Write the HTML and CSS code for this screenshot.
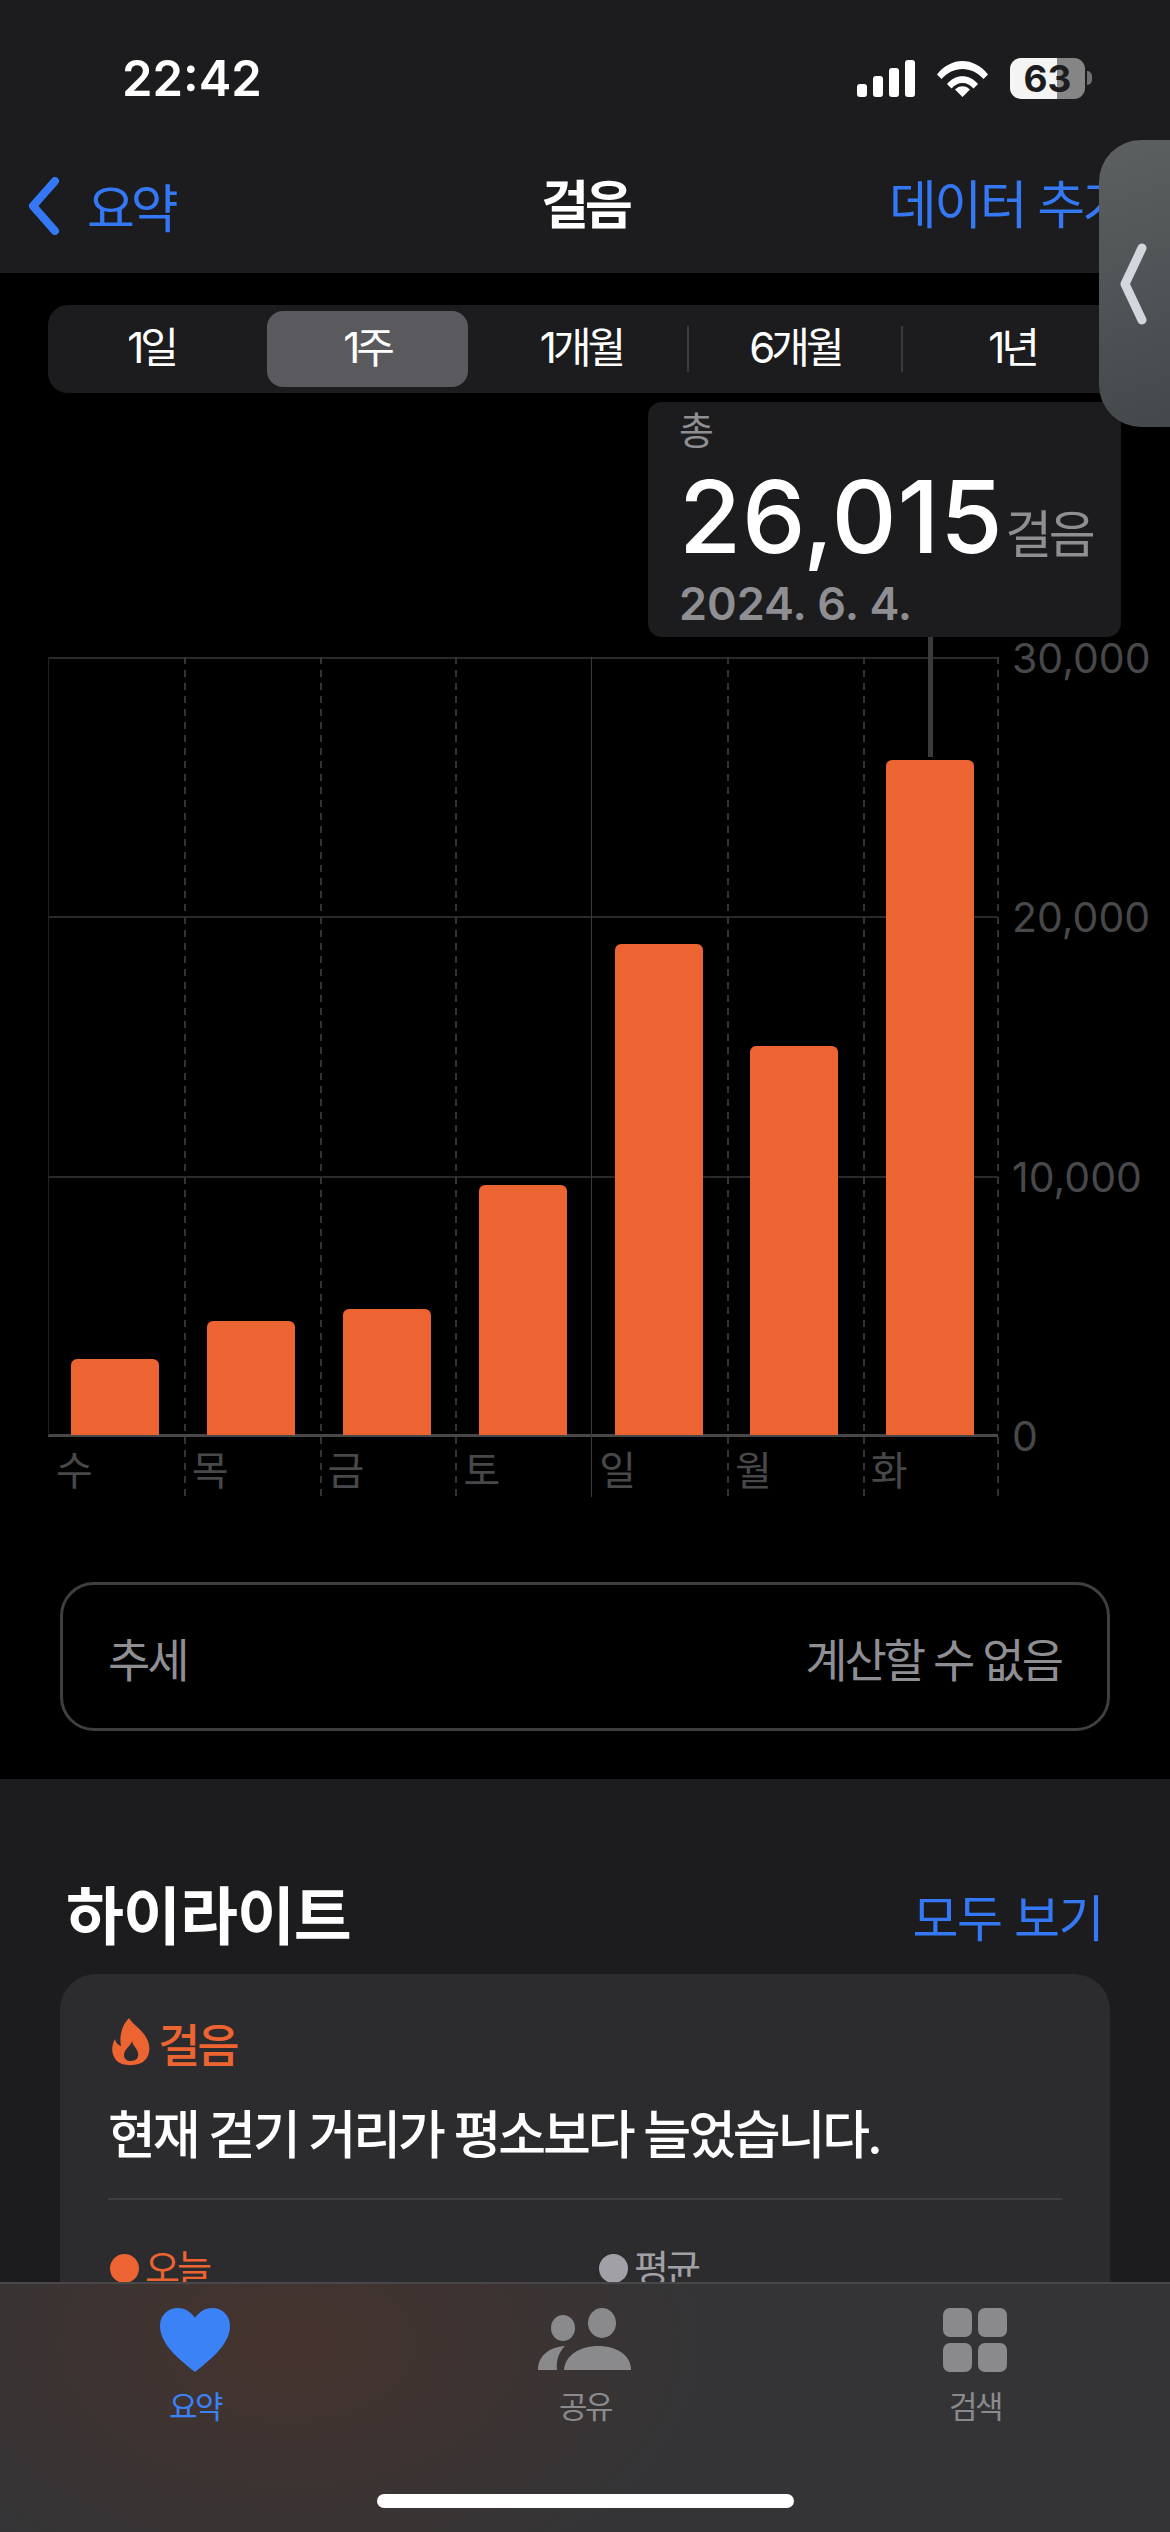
FILE: index.html
```html
<!DOCTYPE html>
<html lang="ko">
<head>
    <meta charset="UTF-8">
    <meta name="viewport" content="width=device-width, initial-scale=1.0">
    <title>걸음</title>
    <link rel="stylesheet" href="styles.css">
</head>
<body>
<div class="screen">

    <header class="top">
        <div class="status">
            <span class="time">22:42</span>
            <div class="status-icons">
                <svg class="signal" width="58" height="37" viewBox="0 0 58 37" fill="#fff">
                    <rect x="0" y="24" width="10" height="13" rx="3"/>
                    <rect x="16" y="16" width="10" height="21" rx="3"/>
                    <rect x="32" y="8" width="10" height="29" rx="3"/>
                    <rect x="48" y="0" width="10" height="37" rx="3"/>
                </svg>
                <svg class="wifi" width="51" height="37" viewBox="0 0 51 37" fill="#fff">
                    <path d="M0 14.500C14-3.500 37-3.500 51 14.500L46.500 19C35 5.500 16 5.500 4.500 19Z"/>
                    <path d="M10 24C18.500 13.500 32.500 13.500 41 24L36.500 28.500C30.500 21 20.500 21 14.500 28.500Z"/>
                    <path d="M18 29.500C22 25 29 25 33 29.500L25.500 37Z"/>
                </svg>
                <div class="battery">
                    <div class="battery-body"><span class="battery-fill"></span><span class="battery-num">63</span></div>
                    <span class="battery-nub"></span>
                </div>
            </div>
        </div>
        <nav class="navbar">
            <a class="back">
                <svg width="32" height="58" viewBox="0 0 32 58" fill="none" stroke="#3478f6" stroke-width="8" stroke-linecap="round" stroke-linejoin="round"><path d="M27 4L5 29L27 54"/></svg>
                <span>요약</span>
            </a>
            <span class="nav-title">걸음</span>
            <a class="nav-action">데이터 추가</a>
        </nav>
    </header>

    <main class="detail">
        <div class="range">
            <span class="range-item first">1일</span>
            <span class="range-item active">1주</span>
            <span class="range-item sep">1개월</span>
            <span class="range-item sep">6개월</span>
            <span class="range-item last">1년</span>
        </div>

        <div class="chart">
            <div class="grid-rows">
                <div class="grid-row"><i class="grid-line"></i><span class="grid-label">30,000</span></div>
                <div class="grid-row"><i class="grid-line"></i><span class="grid-label">20,000</span></div>
                <div class="grid-row"><i class="grid-line"></i><span class="grid-label">10,000</span></div>
                <div class="grid-row base"><i class="grid-line"></i><span class="grid-label">0</span></div>
            </div>
            <div class="days">
                <div class="day first"><div class="plot"><div class="bar" style="height: 76px"></div></div><span class="day-name">수</span></div>
                <div class="day"><div class="plot"><div class="bar" style="height: 114px"></div></div><span class="day-name">목</span></div>
                <div class="day"><div class="plot"><div class="bar" style="height: 126px"></div></div><span class="day-name">금</span></div>
                <div class="day"><div class="plot"><div class="bar" style="height: 250px"></div></div><span class="day-name">토</span></div>
                <div class="day sunday"><div class="plot"><div class="bar" style="height: 491px"></div></div><span class="day-name">일</span></div>
                <div class="day"><div class="plot"><div class="bar" style="height: 389px"></div></div><span class="day-name">월</span></div>
                <div class="day last"><div class="plot"><div class="bar" style="height: 675px"></div></div><span class="day-name">화</span></div>
            </div>
        </div>

        <div class="trend">
            <span>추세</span>
            <span>계산할 수 없음</span>
        </div>
    </main>

    <section class="highlights">
        <div class="section-head">
            <h2>하이라이트</h2>
            <a>모두 보기</a>
        </div>
        <article class="card">
            <div class="card-title">
                <svg width="38" height="48" viewBox="0 0 38 48"><path fill="#ec6431" fill-rule="evenodd" d="M17 0C20 6 30 11 35 21C39 29 38 38 32 43C27 48 11 49 5 43C-1 37-1 28 3 21C4 25 6 27 9 28C7 18 10 7 17 0ZM20 23C19 28 12 31 12 37C12 41 15 43 19 43C24 43 27 40 26 35C25 30 21 28 20 23Z"/></svg>
                <span>걸음</span>
            </div>
            <p class="card-text">현재 걷기 거리가 평소보다 늘었습니다.</p>
            <hr class="card-rule">
            <div class="legend">
                <div class="legend-item today"><i></i><span>오늘</span></div>
                <div class="legend-item avg"><i></i><span>평균</span></div>
            </div>
        </article>
    </section>

    <!-- floats over the content -->
    <div class="tooltip">
        <span class="tip-label">총</span>
        <div class="tip-value"><strong>26,015</strong><span>걸음</span></div>
        <span class="tip-date">2024. 6. 4.</span>
    </div>
    <i class="tip-stem"></i>

    <div class="side-handle">
        <svg width="30" height="84" viewBox="0 0 30 84" fill="none" stroke="#d3d6dc" stroke-width="9" stroke-linecap="round" stroke-linejoin="round"><path d="M24 6L7 42L24 78"/></svg>
    </div>

    <footer class="tabbar">
        <div class="tabs">
            <a class="tab current">
                <svg width="70" height="64" viewBox="0 0 70 64" fill="#3b82f6"><path d="M35 64C24 55 0 38 0 18C0 7 8 0 18 0C25 0 31 4 35 10C39 4 45 0 52 0C62 0 70 7 70 18C70 38 46 55 35 64Z"/></svg>
                <span>요약</span>
            </a>
            <a class="tab">
                <svg width="94" height="64" viewBox="0 0 94 64" fill="#8a8a8d">
                    <ellipse cx="25" cy="20" rx="12" ry="13"/>
                    <path d="M0 62C0 48 11 39 27 38C21 44 18 52 19 62Z"/>
                    <ellipse cx="64" cy="15" rx="14" ry="15"/>
                    <path d="M26 62C27 46 44 38 60 38C77 38 93 46 93 62Z"/>
                </svg>
                <span>공유</span>
            </a>
            <a class="tab">
                <svg width="64" height="64" viewBox="0 0 64 64" fill="#8a8a8d">
                    <rect x="0" y="0" width="29" height="29" rx="7"/>
                    <rect x="35" y="0" width="29" height="29" rx="7"/>
                    <rect x="0" y="35" width="29" height="29" rx="7"/>
                    <rect x="35" y="35" width="29" height="29" rx="7"/>
                </svg>
                <span>검색</span>
            </a>
        </div>
        <div class="home-bar"></div>
    </footer>

</div>
</body>
</html>
```

FILE: styles.css
```css
* {
    box-sizing: border-box;
}
body {
    margin: 0;
    background-color: #000;
    color: #fff;
    font-family: Inter, "Noto Sans CJK KR", sans-serif;
}
a {
    color: #3478f6;
}
.screen {
    position: relative;
    width: 1170px;
    height: 2532px;
    overflow: hidden;
    background-color: #000;
}

/* header */
.top {
    height: 273px;
    background-color: #1c1c1e;
}
.status {
    display: flex;
    justify-content: space-between;
    align-items: center;
    height: 156px;
    padding: 0 78px 0 122px;
}
.time {
    font-size: 49px;
    font-weight: 600;
}
.status-icons {
    display: flex;
    align-items: center;
    gap: 22px;
}
.battery {
    display: flex;
    align-items: center;
    gap: 2px;
}
.battery-body {
    display: flex;
    justify-content: center;
    align-items: center;
    width: 75px;
    height: 41px;
    border-radius: 11px;
    background: linear-gradient(to right, #f4f4f4 63%, #858585 63%);
}
.battery-num {
    color: #1c1c1e;
    font-size: 37px;
    font-weight: 700;
    line-height: 1;
}
.battery-nub {
    width: 5px;
    height: 14px;
    border-radius: 0 7px 7px 0;
    background-color: #6f6f6f;
}
.navbar {
    display: flex;
    align-items: center;
    height: 117px;
    position: relative;
    padding-bottom: 18px;
}
.back {
    display: flex;
    align-items: center;
    gap: 27px;
    margin-left: 28px;
    font-size: 52px;
    letter-spacing: -4px;
}
.nav-title {
    position: absolute;
    left: 0;
    right: 0;
    top: 4px;
    line-height: 91px;
    text-align: center;
    font-size: 52px;
    font-weight: 600;
    letter-spacing: -4px;
}
.nav-action {
    position: absolute;
    left: 889px;
    top: 4px;
    line-height: 91px;
    font-size: 52px;
    letter-spacing: -2.5px;
    white-space: nowrap;
}

/* range picker */
.detail {
    height: 1506px;
    padding-top: 32px;
}
.range {
    display: grid;
    grid-template-columns: 212px repeat(4, 214px);
    align-items: center;
    width: 1072px;
    height: 88px;
    margin-left: 48px;
    border-radius: 20px;
    background-color: #1c1c1e;
}
.range-item {
    position: relative;
    height: 76px;
    line-height: 74px;
    text-align: center;
    font-size: 42px;
    letter-spacing: -4px;
}
.range-item.first {
    padding-right: 6px;
}
.range-item.last {
    padding-left: 6px;
}
.range-item.active {
    margin: 0 6.5px;
    border-radius: 16px;
    background-color: #5a5a5e;
}
.range-item.sep::after {
    content: "";
    position: absolute;
    right: -1px;
    top: 15px;
    width: 2px;
    height: 46px;
    background-color: #3a3a3c;
}

/* chart */
.chart {
    position: relative;
    height: 840px;
    margin: 264px 0 0 48px;
}
.grid-rows {
    position: absolute;
    left: 0;
    top: 0;
    height: 780px;
    display: flex;
    flex-direction: column;
    justify-content: space-between;
}
.grid-row {
    display: flex;
    align-items: center;
    height: 2px;
}
.grid-line {
    width: 950px;
    height: 2px;
    background-color: #2a2a2c;
}
.grid-row.base .grid-line {
    height: 3px;
    background-color: #48484a;
}
.grid-label {
    margin-left: 14px;
    color: #48484a;
    font-size: 41px;
    white-space: nowrap;
}
.days {
    position: relative;
    display: grid;
    grid-template-columns: repeat(7, 135.8px);
    height: 840px;
}
.day {
    display: flex;
    flex-direction: column;
    background: repeating-linear-gradient(to bottom, #333335 0, #333335 7px, transparent 7px, transparent 13px) left top / 2px 100% no-repeat;
}
.day.first {
    background: linear-gradient(#222224, #222224) left top / 1px 778px no-repeat;
}
.day.sunday {
    background: linear-gradient(#3a3a3c, #3a3a3c) left top / 1px 100% no-repeat;
}
.day.last {
    position: relative;
}
.day.last::after {
    content: "";
    position: absolute;
    right: 0;
    top: 0;
    bottom: 0;
    width: 2px;
    background: repeating-linear-gradient(to bottom, #333335 0, #333335 7px, transparent 7px, transparent 13px);
}
.plot {
    display: flex;
    justify-content: center;
    align-items: flex-end;
    height: 778px;
    padding-right: 1px;
}
.bar {
    width: 88px;
    border-radius: 6px 6px 0 0;
    background-color: #ec6431;
}
.day-name {
    padding: 12px 0 0 8px;
    color: #48484a;
    font-size: 40px;
    line-height: 48px;
}

/* trend */
.trend {
    display: flex;
    justify-content: space-between;
    align-items: center;
    width: 1050px;
    height: 149px;
    margin: 85px 0 0 60px;
    padding: 0 46px 0 45px;
    border: 3px solid #3f3f41;
    border-radius: 34px;
    color: #8e8e93;
    font-size: 46px;
    letter-spacing: -3px;
}

/* highlights */
.highlights {
    height: 753px;
    padding: 94px 60px 0;
    background-color: #1c1c1e;
}
.section-head {
    display: flex;
    justify-content: space-between;
    align-items: center;
    height: 76px;
    padding-right: 7px;
}
.section-head h2 {
    margin: 0 0 0 6px;
    font-size: 63px;
    font-weight: 700;
    letter-spacing: -1px;
}
.section-head a {
    padding-top: 8px;
    font-size: 50px;
    letter-spacing: -1.5px;
}
.card {
    height: 420px;
    margin-top: 25px;
    padding: 42px 48px 0;
    border-radius: 36px;
    background-color: #2c2c2e;
}
.card-title {
    display: flex;
    align-items: center;
    gap: 8px;
    height: 52px;
    margin-left: 4px;
    color: #ec6431;
    font-size: 46px;
    font-weight: 500;
    letter-spacing: -3px;
}
.card-text {
    margin: 36px 0 0;
    font-size: 52px;
    font-weight: 500;
    line-height: 64px;
    letter-spacing: -3.1px;
}
.card-rule {
    height: 2px;
    margin: 30px 0 0;
    border: 0;
    background-color: #3f3f41;
}
.legend {
    display: flex;
    margin-top: 44px;
    font-size: 38px;
    letter-spacing: -3px;
}
.legend-item {
    flex: none;
    display: flex;
    align-items: center;
    gap: 6px;
    width: 489px;
    line-height: 48px;
}
.legend-item i {
    width: 29px;
    height: 29px;
    margin-left: 2px;
    border-radius: 50%;
}
.today {
    color: #ec6431;
}
.today i {
    background-color: #ec6431;
}
.avg {
    color: #a0a0a6;
}
.avg i {
    background-color: #a0a0a6;
}

/* tooltip */
.tooltip {
    position: absolute;
    left: 648px;
    top: 402px;
    width: 473px;
    height: 235px;
    padding-left: 31px;
    border-radius: 14px;
    background-color: #1c1c1e;
}
.tip-label {
    display: block;
    padding-top: 6px;
    color: #8e8e93;
    font-size: 38px;
    line-height: 44px;
}
.tip-value {
    display: flex;
    align-items: baseline;
    height: 116px;
    margin-top: 6px;
    line-height: 116px;
}
.tip-value strong {
    font-size: 101px;
    font-weight: 500;
    letter-spacing: 0.7px;
}
.tip-value span {
    margin-left: 2px;
    color: #8e8e93;
    font-size: 51px;
    letter-spacing: -3.5px;
}
.tip-date {
    display: block;
    color: #8e8e93;
    font-size: 45px;
    font-weight: 600;
    line-height: 60px;
}
.tip-stem {
    position: absolute;
    left: 928px;
    top: 637px;
    width: 5px;
    height: 120px;
    background-color: #3a3a3c;
}
.side-handle {
    position: absolute;
    left: 1099px;
    top: 140px;
    display: flex;
    align-items: center;
    width: 71px;
    height: 287px;
    padding: 0 0 0 19px;
    border-radius: 42px 0 0 42px;
    background: linear-gradient(160deg, #5c6061, #43484b);
}

/* tab bar */
.tabbar {
    position: absolute;
    left: 0;
    right: 0;
    bottom: 0;
    height: 250px;
    border-top: 2px solid #48484a;
    background: radial-gradient(ellipse 420px 260px at 290px 60px, #45332e, rgba(69, 51, 46, 0)), #343436;
}
.tabs {
    display: grid;
    grid-template-columns: 390px 390px 390px;
    padding-top: 24px;
}
.tab {
    display: flex;
    flex-direction: column;
    align-items: center;
    gap: 16px;
    color: #8a8a8d;
    font-size: 31px;
    line-height: 38px;
    letter-spacing: -2.5px;
}
.tab.current {
    color: #3b82f6;
}
.home-bar {
    position: absolute;
    left: 377px;
    bottom: 24px;
    width: 417px;
    height: 14px;
    border-radius: 7px;
    background-color: #fff;
}
```
